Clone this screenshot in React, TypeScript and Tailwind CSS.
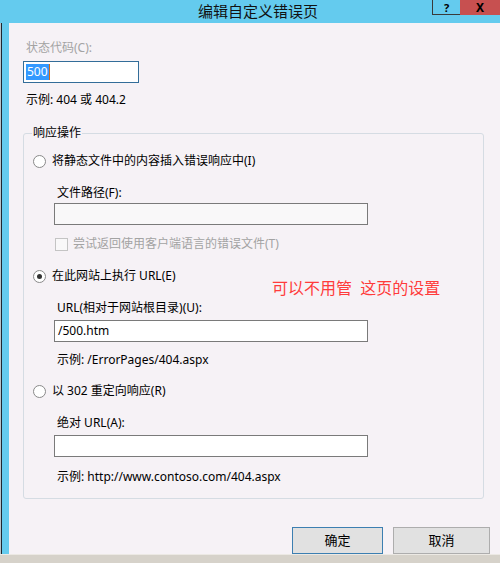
import React from 'react';

const Radio = ({ checked = false }: { checked?: boolean }) => (
  <span className="w-[13px] h-[13px] rounded-full border border-[#8a8a8a] bg-white flex items-center justify-center shrink-0">
    {checked && <span className="w-[5px] h-[5px] rounded-full bg-[#333]" />}
  </span>
);

export default function App() {
  return (
    <div
      className="w-[500px] h-[563px] flex flex-col bg-[#d6d2ca] overflow-hidden text-[12px] text-black"
      style={{ fontFamily: '"Noto Sans", "Noto Sans CJK SC", sans-serif' }}
    >
      {/* Title bar */}
      <div className="h-[23px] shrink-0 bg-[#64cbee] flex items-start">
        <span className="ml-[198px] mt-[1px] text-[15px] leading-[20px] text-[#111]">编辑自定义错误页</span>
        <div className="ml-auto flex">
          <div className="w-[28px] h-[15px] border-l border-b border-[#3a3a3a] flex items-center justify-center text-[11px] font-bold leading-none">
            ?
          </div>
          <div className="w-[40px] h-[15px] bg-[#c75050] flex items-center justify-center text-[12px] font-bold leading-none">
            X
          </div>
        </div>
      </div>

      {/* Body */}
      <div className="flex h-[531px] shrink-0">
        <div className="w-[1px] bg-[#b8c4ca]" />
        <div className="w-[1px] bg-[#1d2730]" />
        <div className="w-[7px] bg-[#64cbee]" />
        <div className="flex-1 bg-[#f6f2f6] pl-[14px] pr-[10px] pt-[17px] overflow-hidden">
          <p className="leading-[16px] text-[#a3a3a3] ml-[3px]">状态代码(C):</p>
          <div className="mt-[5px] w-[116px] h-[22px] border border-[#336d99] bg-white flex items-center pl-[2px]">
            <span className="bg-[#3399ff] text-white leading-[16px] px-[1px]">500</span>
            <span className="w-[1px] h-[16px] bg-[#d06a1a]" />
          </div>
          <p className="mt-[9px] leading-[16px] ml-[3px]">示例: 404 或 404.2</p>

          {/* Response action group */}
          <fieldset className="relative mt-[17px] mr-[6px] border border-[#d5dce3] rounded-[3px] pl-[9px] pb-[13px]">
            <legend className="ml-[-1px] px-[1px] leading-[16px]">响应操作</legend>

            <div className="mt-[12px] flex items-center gap-[6px] h-[16px]">
              <Radio />
              <span>将静态文件中的内容插入错误响应中(I)</span>
            </div>
            <div className="pl-[21px]">
              <p className="mt-[16px] leading-[16px] ml-[3px]">文件路径(F):</p>
              <div className="mt-[2px] w-[314px] h-[22px] border border-[#7a7a7a] bg-[#f9f8f9]" />
              <div className="mt-[11px] flex items-center gap-[5px] h-[16px] ml-[1px]">
                <span className="w-[13px] h-[13px] border border-[#c4c4c4] bg-[#f9f8f9]" />
                <span className="text-[#a3a3a3]">尝试返回使用客户端语言的错误文件(T)</span>
              </div>
            </div>

            <div className="mt-[16px] flex items-center gap-[6px] h-[16px]">
              <Radio checked />
              <span>在此网站上执行 URL(E)</span>
            </div>
            <div className="pl-[21px]">
              <p className="mt-[16px] leading-[16px] ml-[3px]">URL(相对于网站根目录)(U):</p>
              <div className="mt-[4px] w-[314px] h-[22px] border border-[#7a7a7a] bg-white flex items-center pl-[3px]">
                /500.htm
              </div>
              <p className="mt-[10px] leading-[16px] ml-[3px]">示例: /ErrorPages/404.aspx</p>
            </div>

            <div className="mt-[15px] flex items-center gap-[6px] h-[16px]">
              <Radio />
              <span>以 302 重定向响应(R)</span>
            </div>
            <div className="pl-[21px]">
              <p className="mt-[16px] leading-[16px] ml-[3px]">绝对 URL(A):</p>
              <div className="mt-[4px] w-[314px] h-[22px] border border-[#7a7a7a] bg-white" />
              <p className="mt-[12px] leading-[16px] ml-[3px]">示例: http://www.contoso.com/404.aspx</p>
            </div>

            {/* annotation */}
            <span className="absolute left-[248px] top-[138px] text-[16px] leading-[18px] text-[#ff3b3b] whitespace-pre">
              可以不用管  这页的设置
            </span>
          </fieldset>

          <div className="mt-[28px] flex justify-end gap-[10px]">
            <button className="w-[91px] h-[27px] border border-[#3c7fb1] bg-[#e1e1e1] text-[13px] leading-[16px] pb-[1px]">
              确定
            </button>
            <button className="w-[97px] h-[27px] border border-[#adadad] bg-[#e1e1e1] text-[13px] leading-[16px] pb-[1px]">
              取消
            </button>
          </div>
        </div>
      </div>
      <div className="h-[1px] shrink-0 bg-[#ece9e4]" />
    </div>
  );
}
